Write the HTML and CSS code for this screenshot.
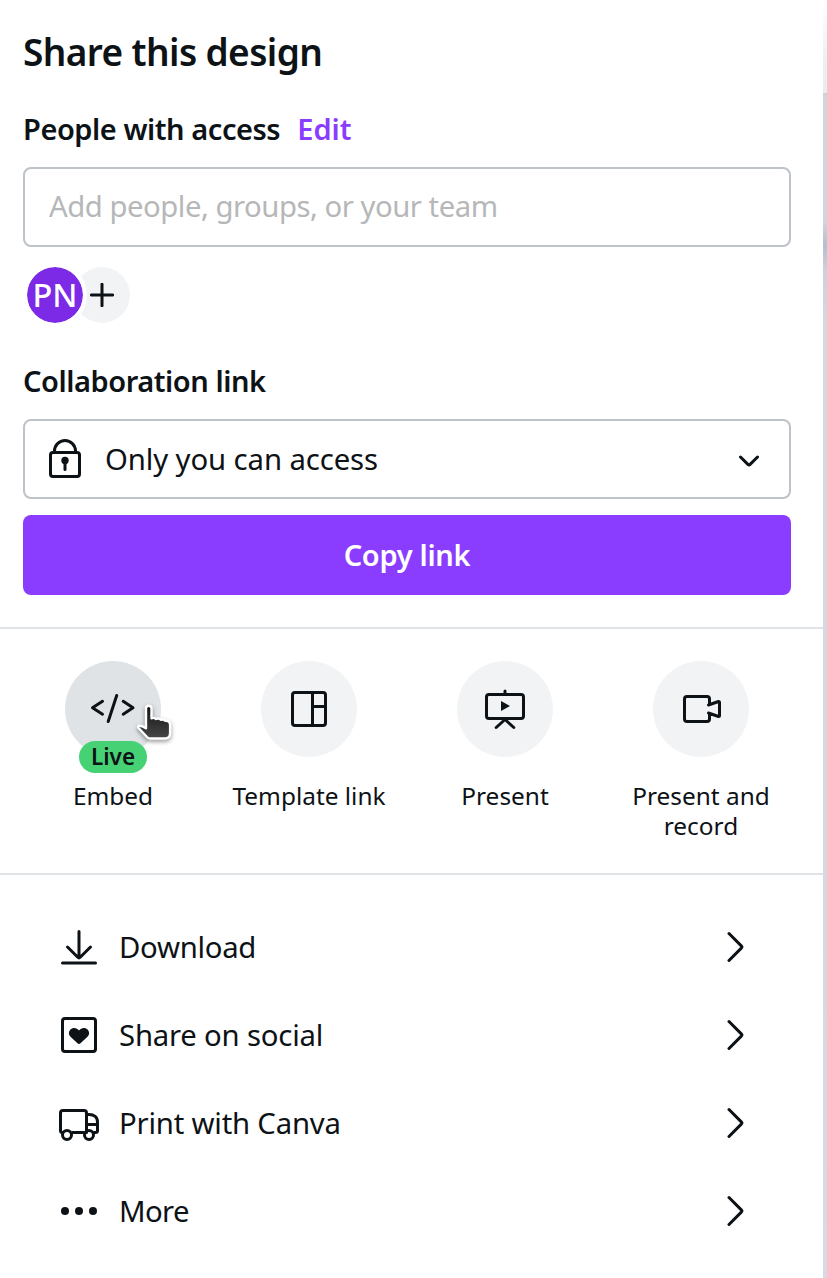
FILE: index.html
```html
<!DOCTYPE html>
<html lang="en">
<head>
    <meta charset="UTF-8">
    <meta name="viewport" content="width=device-width, initial-scale=1.0">
    <title>Share this design</title>
    <link rel="stylesheet" href="styles.css">
</head>
<body>
    <div class="panel">
        <div class="share">
            <h1 class="title">Share this design</h1>
            <div class="access-header">
                <h2>People with access</h2>
                <a class="edit" href="#">Edit</a>
            </div>
            <input type="text" class="people-input" placeholder="Add people, groups, or your team">
            <div class="avatars">
                <div class="avatar">PN</div>
                <div class="avatar-add">
                    <svg width="24" height="24" viewBox="0 0 24 24"><path d="M12 1.200v21.600M1.200 12h21.600"/></svg>
                </div>
            </div>
            <h2 class="collab">Collaboration link</h2>
            <div class="link-select">
                <svg width="32" height="40" viewBox="0 0 32 40">
                    <rect x="1.500" y="13.500" width="29" height="24" rx="2.500"/>
                    <path d="M5.500 13.500v-1.500a10.500 10.500 0 0 1 21 0v1.500"/>
                    <circle class="solid" cx="16" cy="21.500" r="3.700"/>
                    <path d="M16 22v8.500"/>
                </svg>
                <span class="link-text">Only you can access</span>
                <svg class="chevron" width="20" height="12" viewBox="0 0 20 12"><path d="M1.500 2l7.400 7.400q1.100 1.100 2.200 0L18.500 2"/></svg>
            </div>
            <button type="button" class="copy">Copy link</button>
        </div>

        <div class="actions">
            <div class="action">
                <div class="circle active">
                    <svg width="48" height="48" viewBox="0 0 48 48"><path d="M13.500 16.300L3.500 22.800l10 6.400M34.200 16.300l9.800 6.500-9.800 6.400M27.700 10.500l-8.500 26"/></svg>
                    <span class="badge">Live</span>
                    <svg class="cursor" width="40" height="42" viewBox="0 0 40 42">
                        <defs>
                            <linearGradient id="hand" x1="0" y1="0" x2="0" y2="1">
                                <stop offset="0" stop-color="#111"/>
                                <stop offset="1" stop-color="#484848"/>
                            </linearGradient>
                        </defs>
                        <path d="M12 5.500c0-3.600 5.500-3.600 5.500 0v9.800c1.500-.7 3.300-.4 4.500.7 1.900-.8 3.800-.4 4.800.8 1.700-.6 3.200-.2 4.300 1 2.900-.5 4.900.8 5 4.200v8c0 3.600-1.800 5.500-5.200 5.500H16.200c-1.200 0-2.200-.4-3-1.300L4.600 25c-1-1.300-.3-2.500 1.100-2.300 2.400.2 4.400 1.200 6.300 2.600z" fill="url(#hand)"/>
                    </svg>
                </div>
                <span class="label">Embed</span>
            </div>
            <div class="action">
                <div class="circle">
                    <svg width="48" height="48" viewBox="0 0 48 48"><rect x="7.500" y="7.500" width="33" height="33" rx="2.500"/><path d="M27.500 7.500v33M27.500 21.500h13"/></svg>
                </div>
                <span class="label">Template link</span>
            </div>
            <div class="action">
                <div class="circle">
                    <svg width="48" height="48" viewBox="0 0 48 48"><rect x="5.500" y="9.500" width="37" height="24" rx="2.500"/><path d="M24 9V6M24 34.500l-8.800 8M24 34.500l8.800 8"/><path class="solid" d="M20 16v10l9-5z"/></svg>
                </div>
                <span class="label">Present</span>
            </div>
            <div class="action">
                <div class="circle">
                    <svg width="48" height="48" viewBox="0 0 48 48"><path d="M32.500 19.500V14q0-2.500-2.500-2.500H10q-2.500 0-2.500 2.500v20q0 2.500 2.500 2.500h20q2.500 0 2.500-2.500v-5.500M31.500 20l10-3.500q1 0 1 1v13q0 1-1 1l-10-3.500"/></svg>
                </div>
                <span class="label">Present and<br>record</span>
            </div>
        </div>

        <div class="menu">
            <div class="menu-item">
                <svg width="48" height="48" viewBox="0 0 48 48"><path d="M24 8.500v26M12.500 24l10.300 10.300q1.200 1.200 2.400 0L35.500 24M7.500 40h33"/></svg>
                <span class="menu-text download">Download</span>
                <svg class="arrow" width="18" height="32" viewBox="0 0 18 32"><path d="M2 2.500l12.300 12.400q1.100 1.100 0 2.200L2 29.500"/></svg>
            </div>
            <div class="menu-item">
                <svg width="48" height="48" viewBox="0 0 48 48"><rect x="7.500" y="7.500" width="33" height="33" rx="2.500"/><path class="solid" d="M24 33q-.8 0-1.500-.7l-7-6.600c-2.200-2.200-2.100-5-.3-7 2.500-2.700 6.700-2.200 8.800.9 2.100-3.100 6.300-3.600 8.800-.9 1.800 2 1.900 4.800-.3 7l-7 6.600q-.7.7-1.500.7z"/></svg>
                <span class="menu-text social">Share on social</span>
                <svg class="arrow" width="18" height="32" viewBox="0 0 18 32"><path d="M2 2.500l12.300 12.400q1.100 1.100 0 2.200L2 29.500"/></svg>
            </div>
            <div class="menu-item">
                <svg width="48" height="48" viewBox="0 0 48 48"><path d="M7.500 33.500q-2 0-2-2V14q0-2.500 2.500-2.500h21q2.500 0 2.500 2.500v19.500M17.500 33.500h11M31.500 15.500H34c5 0 8.500 2.500 8.500 7.500v8.500q0 2-2 2h-1.500M32 25.500h10"/><circle cx="12" cy="36" r="4.500"/><circle cx="34" cy="36" r="4.500"/></svg>
                <span class="menu-text print">Print with Canva</span>
                <svg class="arrow" width="18" height="32" viewBox="0 0 18 32"><path d="M2 2.500l12.300 12.400q1.100 1.100 0 2.200L2 29.500"/></svg>
            </div>
            <div class="menu-item">
                <svg width="48" height="48" viewBox="0 0 48 48"><circle class="solid" cx="10" cy="24" r="4"/><circle class="solid" cx="24" cy="24" r="4"/><circle class="solid" cx="38" cy="24" r="4"/></svg>
                <span class="menu-text more">More</span>
                <svg class="arrow" width="18" height="32" viewBox="0 0 18 32"><path d="M2 2.500l12.300 12.400q1.100 1.100 0 2.200L2 29.500"/></svg>
            </div>
        </div>
    </div>
</body>
</html>
```
FILE: styles.css
```css
* {
    box-sizing: border-box;
}
body {
    margin: 0;
    height: 1278px;
    overflow: hidden;
    font-family: "Noto Sans", sans-serif;
    font-size: 29.3px;
    color: #0d1216;
    background: linear-gradient(#fff 0, #eceff2 60px, #eaedf0 93px, #c9ced3 93px, #d1d6dc 96px, #d1d6de 220px, #b5bfce 245px, #cbd0dc 270px, #d3d9de 320px, #d3d9de 800px, #d8dae3 1278px);
}
svg {
    display: block;
    flex: none;
    fill: none;
    stroke: #0d1216;
    stroke-width: 3;
    stroke-linecap: round;
    stroke-linejoin: round;
}
.solid {
    fill: #0d1216;
    stroke: none;
}
.panel {
    width: 823px;
    height: 1278px;
    background-color: #fff;
}
.share {
    height: 629px;
    padding: 28px 32px 0 23px;
    border-bottom: 2px solid #dfe3e6;
}
h1, h2 {
    margin: 0;
    white-space: nowrap;
}
.title {
    font-size: 37px;
    line-height: 48px;
    font-weight: 600;
    letter-spacing: -0.6px;
}
.access-header {
    display: flex;
    gap: 17px;
    margin-top: 33px;
}
h2, .edit {
    font-size: 29px;
    font-weight: 600;
    line-height: 40px;
    letter-spacing: -0.45px;
}
.edit {
    color: #8b3dff;
    text-decoration: none;
    letter-spacing: 0;
}
.people-input {
    display: block;
    width: 100%;
    height: 80px;
    margin-top: 18px;
    padding: 0 24px 2px;
    border: 2px solid #bdc3c8;
    border-radius: 8px;
    font: inherit;
    letter-spacing: -0.48px;
}
.people-input::placeholder {
    color: #b6b7b9;
    opacity: 1;
}
.avatars {
    display: flex;
    margin-top: 16px;
}
.avatar, .avatar-add {
    display: flex;
    align-items: center;
    justify-content: center;
    border-radius: 50%;
}
.avatar {
    width: 64px;
    height: 64px;
    padding-bottom: 1px;
    border: 4px solid #fff;
    background-color: #7d2ae7;
    background-clip: padding-box;
    color: #fff;
    font-size: 32.5px;
    font-weight: 500;
    z-index: 1;
}
.avatar-add {
    width: 56px;
    height: 56px;
    margin: 4px 0 0 -13px;
    background-color: #f1f3f5;
}
.collab {
    margin-top: 34px;
}
.link-select {
    display: flex;
    align-items: center;
    height: 80px;
    margin-top: 18px;
    padding: 0 30px 0 24px;
    border: 2px solid #bdc3c8;
    border-radius: 8px;
}
.link-text {
    flex: 1;
    margin-left: 24px;
    letter-spacing: -0.1px;
}
.chevron {
    margin-top: 4px;
}
.copy {
    display: block;
    width: 100%;
    height: 80px;
    margin-top: 16px;
    padding: 0 0 2px;
    border: none;
    border-radius: 8px;
    background-color: #8b3dff;
    color: #fff;
    font: 600 29px "Noto Sans", sans-serif;
    letter-spacing: -0.3px;
}
.actions {
    display: grid;
    grid-template-columns: repeat(4, 196px);
    height: 246px;
    padding: 32px 0 0 15px;
    border-bottom: 2px solid #dfe3e6;
}
.action {
    display: flex;
    flex-direction: column;
    align-items: center;
}
.circle {
    position: relative;
    display: flex;
    align-items: center;
    justify-content: center;
    width: 96px;
    height: 96px;
    border-radius: 50%;
    background-color: #f1f3f5;
}
.active {
    background-color: #dfe3e6;
}
.badge {
    position: absolute;
    left: 14px;
    top: 80px;
    width: 68px;
    height: 32px;
    border-radius: 16px;
    background-color: #47d175;
    font-size: 22.5px;
    font-weight: 600;
    line-height: 31px;
    text-align: center;
}
.cursor {
    position: absolute;
    left: 69px;
    top: 42px;
    overflow: visible;
    stroke: #fff;
    stroke-width: 2.4;
    filter: drop-shadow(0 2px 2px rgba(0, 0, 0, 0.4));
}
.label {
    margin-top: 24px;
    font-size: 24.4px;
    line-height: 30px;
    text-align: center;
    white-space: nowrap;
}
.menu {
    padding: 28px 78px 0 55px;
}
.menu-item {
    display: flex;
    align-items: center;
    height: 88px;
}
.menu-text {
    flex: 1;
    margin-left: 16px;
}
.download {
    letter-spacing: -0.3px;
}
.social {
    letter-spacing: -0.2px;
}
.print {
    letter-spacing: -0.2px;
}
.more {
    letter-spacing: -0.6px;
}
```
